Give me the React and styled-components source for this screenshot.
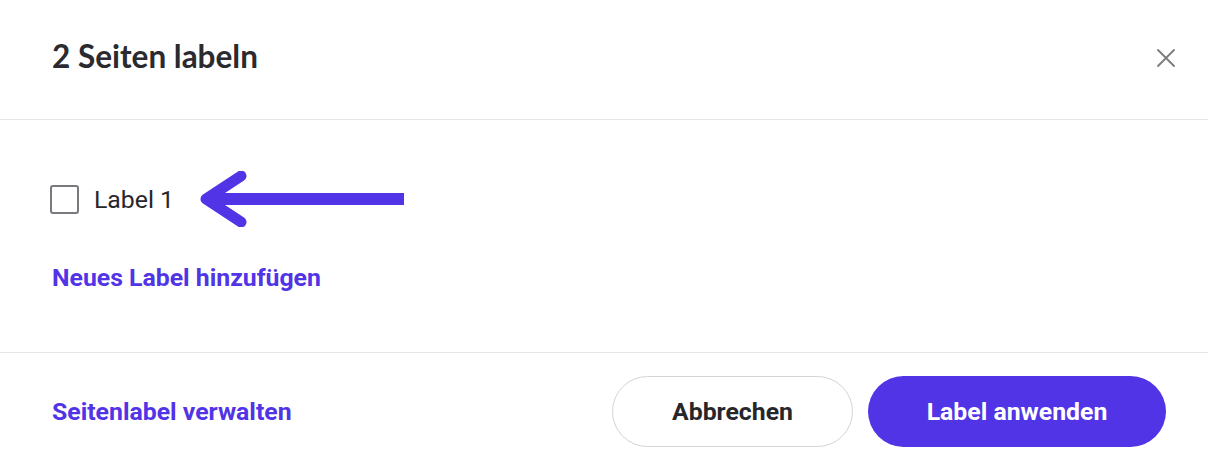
import React from "react";
import styled, { createGlobalStyle } from "styled-components";

const Global = createGlobalStyle`
  html, body {
    margin: 0;
    padding: 0;
    background: #ffffff;
  }
  body {
    font-family: Roboto, "Liberation Sans", sans-serif;
    color: #27272b;
  }
`;

const PURPLE = "#5034e6";

const Dialog = styled.div`
  width: 1208px;
  height: 464px;
  background: #fff;
  overflow: hidden;
`;

const Header = styled.div`
  height: 120px;
  box-sizing: border-box;
  display: flex;
  align-items: center;
  justify-content: space-between;
  padding: 0 32px 8px 52px;
  border-bottom: 1px solid #e6e6e8;
`;

const Title = styled.h2`
  margin: 0;
  font-family: Lato, "Open Sans", sans-serif;
  font-weight: 700;
  font-size: 31.5px;
  color: #2a2a2f;
`;

const CloseButton = styled.button`
  border: 0;
  background: none;
  padding: 0;
  width: 18px;
  height: 18px;
  display: flex;
  cursor: pointer;
  margin-right: 1px;
  margin-top: 4px;
`;

const Body = styled.div`
  height: 233px;
  box-sizing: border-box;
  padding: 65px 52px 0 50px;
  border-bottom: 1px solid #e6e6e8;
  display: flex;
  flex-direction: column;
  align-items: flex-start;
`;

const Row = styled.label`
  display: flex;
  align-items: center;
  gap: 15px;
  height: 28px;
  cursor: pointer;
`;

const Box = styled.span`
  width: 25px;
  height: 25px;
  border: 2px solid #7a7a7e;
  border-radius: 3px;
  display: inline-block;
`;

const LabelText = styled.span`
  font-size: 24.8px;
  color: #27272b;
`;

const Arrow = styled.svg`
  margin-left: 9px;
  flex-shrink: 0;
`;

const TextLink = styled.a`
  font-family: Roboto, "Liberation Sans", sans-serif;
  font-weight: 700;
  font-size: 24.8px;
  color: ${PURPLE};
  text-decoration: none;
  cursor: pointer;
`;

const AddLink = styled(TextLink)`
  margin-top: 50px;
  margin-left: 2px;
`;

const Footer = styled.div`
  display: flex;
  align-items: center;
  justify-content: space-between;
  padding: 23px 42px 0 52px;
`;

const Actions = styled.div`
  display: flex;
  gap: 15px;
`;

const Button = styled.button`
  height: 71px;
  width: ${(p) => p.$w}px;
  border-radius: 36px;
  font-family: Roboto, "Liberation Sans", sans-serif;
  font-weight: 700;
  font-size: 24.8px;
  cursor: pointer;
  border: ${(p) => (p.$primary ? "0" : "1.5px solid #d4d4d6")};
  background: ${(p) => (p.$primary ? PURPLE : "#fff")};
  color: ${(p) => (p.$primary ? "#fff" : "#27272b")};
`;

export default function App() {
  return (
    <>
      <Global />
      <Dialog>
        <Header>
          <Title>2 Seiten labeln</Title>
          <CloseButton aria-label="Schließen">
            <svg width="18" height="18" viewBox="0 0 18 18">
              <path d="M1 1 L17 17 M17 1 L1 17" stroke="#7b7b7f" strokeWidth="1.8" strokeLinecap="round" />
            </svg>
          </CloseButton>
        </Header>
        <Body>
          <Row>
            <Box />
            <LabelText>Label 1</LabelText>
            <Arrow width="206" height="56" viewBox="0 0 206 56">
              <path d="M206 28 H14" stroke={PURPLE} strokeWidth="12" />
              <path d="M43 5 L8 28 L43 51" stroke={PURPLE} strokeWidth="11" fill="none" strokeLinecap="round" strokeLinejoin="round" />
            </Arrow>
          </Row>
          <AddLink>Neues Label hinzufügen</AddLink>
        </Body>
        <Footer>
          <TextLink>Seitenlabel verwalten</TextLink>
          <Actions>
            <Button $w={241}>Abbrechen</Button>
            <Button $w={298} $primary>Label anwenden</Button>
          </Actions>
        </Footer>
      </Dialog>
    </>
  );
}
